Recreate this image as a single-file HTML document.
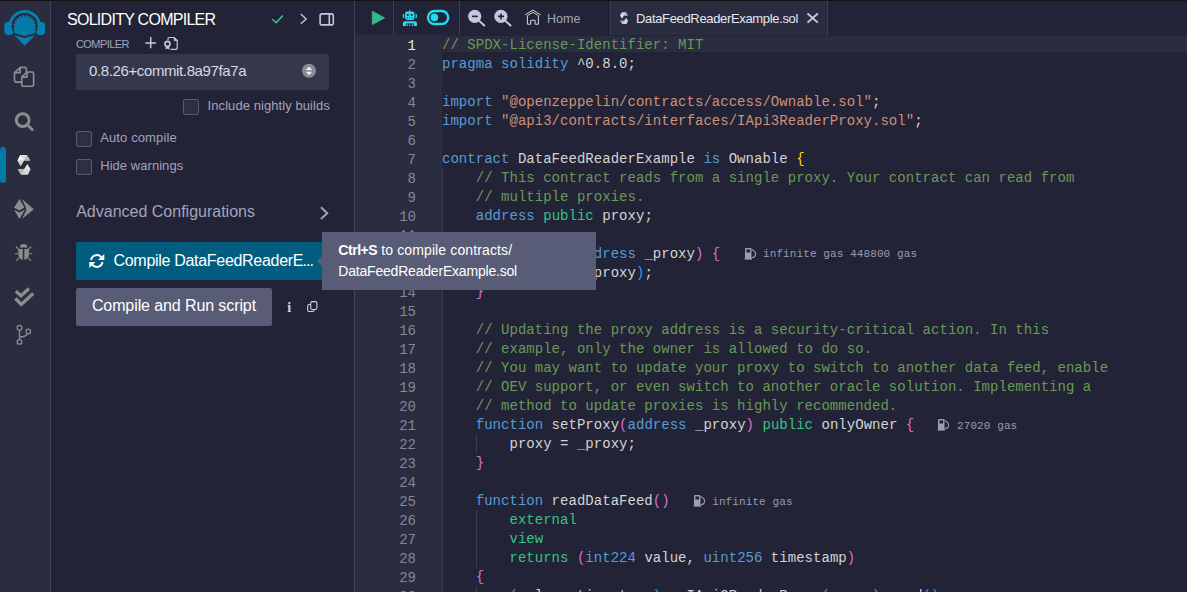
<!DOCTYPE html>
<html><head><meta charset="utf-8">
<style>
*{box-sizing:border-box;margin:0;padding:0}
html,body{width:1187px;height:592px;overflow:hidden;background:#222336;font-family:"Liberation Sans",sans-serif;color:#babbcc}
.abs{position:absolute}
.t{position:absolute;line-height:1;white-space:pre}
svg{position:absolute;overflow:visible}
#topline{left:0;top:0;width:1187px;height:1px;background:#141414}
#iconpanel{left:0;top:1px;width:50px;height:591px;background:#2a2c3f}
#iconborder{left:50px;top:1px;width:1px;height:591px;background:#404257}
#sideborder{left:354px;top:1px;width:1px;height:591px;background:#404257}
#gutter{left:355px;top:35px;width:87px;height:557px;background:#2a2c3f}
#curline{left:443px;top:36px;width:744px;height:16px;background:#2a2c3f}
.code{position:absolute;left:442px;top:36px;letter-spacing:0.03px;font-family:"Liberation Mono",monospace;font-size:14px;line-height:19px;white-space:pre;color:#d4d4d4}
.lnums{position:absolute;left:355px;top:37px;width:61px;text-align:right;font-family:"Liberation Mono",monospace;font-size:14px;line-height:19px;color:#858797;white-space:pre}
.c{color:#6a9955}.k{color:#569cd6}.m{color:#33c486}.s{color:#ce9178}.y{color:#ffd700}.p{color:#da70d6}.b{color:#179fff}
.gas{position:absolute;font-family:"Liberation Mono",monospace;font-size:11px;line-height:1;color:#9a9bae;white-space:pre;letter-spacing:0.1px}
.guide{position:absolute;width:1px;background:#3a3c50}
.cb{position:absolute;width:16px;height:16px;border:1px solid #585a74;border-radius:2px;background:#2d2f43}
</style></head><body>
<div class="abs" id="topline"></div>
<div class="abs" id="iconpanel"></div>
<div class="abs" id="iconborder"></div>
<div class="abs" id="sideborder"></div>
<div class="abs" id="gutter"></div>
<div class="abs" id="curline"></div>

<!-- ICON PANEL -->
<svg style="left:0;top:0" width="50" height="50" viewBox="0 0 50 50">
  <g fill="#0681b1">
    <path d="M8.4 26.3 A16.3 16.3 0 0 1 41 26.3 L38 26.3 A13.3 13.3 0 0 0 11.4 26.3 Z"/>
    <rect x="4.4" y="22" width="9" height="12.9" rx="3.6"/>
    <rect x="36" y="22" width="9.1" height="12.9" rx="3.6"/>
  </g>
  <circle cx="24.7" cy="26.3" r="13.0" fill="#2a2c3f"/>
  <path d="M14.08 30.16 A11.3 11.3 0 1 1 35.32 30.16 L35.3 33 L24.7 35.9 L14.1 33 Z" fill="#037ca9"/>
  <path fill="#2a2c3f" d="M36.52 27.65 L34.10 26.30 L36.52 24.95 Z M36.36 23.93 L33.64 23.40 L35.53 21.37 Z M35.06 20.44 L32.30 20.77 L33.47 18.26 Z M32.74 17.53 L30.23 18.70 L30.56 15.94 Z M29.63 15.47 L27.60 17.36 L27.07 14.64 Z M26.05 14.48 L24.70 16.90 L23.35 14.48 Z M22.33 14.64 L21.80 17.36 L19.77 15.47 Z M18.84 15.94 L19.17 18.70 L16.66 17.53 Z M15.93 18.26 L17.10 20.77 L14.34 20.44 Z M13.87 21.37 L15.76 23.40 L13.04 23.93 Z M12.88 24.95 L15.30 26.30 L12.88 27.65 Z"/>
  <path d="M14.4 35.2 L24.7 38 L35 35.2 L24.7 45.7 Z" fill="#0681b1"/>
</svg>
<!-- files -->
<svg style="left:0;top:55px" width="50" height="40" viewBox="0 55 50 40" fill="none" stroke="#8e8e8e" stroke-width="1.6" stroke-linejoin="round">
  <path d="M20.2 67.4 L25 67.4 Q26.3 67.4 26.3 68.7 L26.3 72.3 M21.3 82.1 L15.8 82.1 Q14.5 82.1 14.5 80.8 L14.5 72.6 L20.2 67.4 L20.2 72.6 L14.5 72.6"/>
  <path d="M27 72 L32.3 72 Q33.6 72 33.6 73.3 L33.6 85 Q33.6 86.3 32.3 86.3 L23.1 86.3 Q21.8 86.3 21.8 85 L21.8 77.1 L27 72 L27 77.1 L21.8 77.1"/>
</svg>
<!-- search -->
<svg style="left:0;top:100px" width="50" height="40" viewBox="0 100 50 40" fill="none" stroke="#8c8c8c" stroke-width="3" stroke-linecap="round">
  <circle cx="22.7" cy="120.1" r="6.4"/>
  <path d="M27.5 125 L32.2 129.5"/>
</svg>
<!-- active bar -->
<div class="abs" style="left:0;top:147px;width:6px;height:36px;background:#007aa6;border-radius:2.5px 3px 3px 2.5px/3px 3px 3px 3px"></div>
<!-- solidity -->
<svg style="left:0;top:145px" width="50" height="40" viewBox="0 145 50 40">
  <path d="M20.3 155.1 L26.9 155.1 L30.2 160.4 L24 160.4 L20.6 166 L17.5 160.4 Z" fill="#dedede"/>
  <path d="M20.3 155.1 L24 160.4 L17.5 160.4 Z" fill="#f0f0f0"/>
  <path d="M26.9 155.1 L30.2 160.4 L24 160.4 Z" fill="#b4b4b4"/>
  <path d="M17.5 160.4 L24 160.4 L20.6 166 Z" fill="#d2d2d2"/>
  <path d="M27.4 164.2 L30.5 169.5 L27.9 174.8 L21.1 174.8 L17.8 169.2 L24.2 169.2 Z" fill="#d6d6d6"/>
  <path d="M27.4 164.2 L30.5 169.5 L24.2 169.2 Z" fill="#e6e6e6"/>
  <path d="M17.8 169.2 L24.2 169.2 L21.1 174.8 Z" fill="#b8b8b8"/>
</svg>
<!-- deploy -->
<svg style="left:0;top:195px" width="50" height="30" viewBox="0 195 50 30" fill="#8c8c8c">
  <path d="M19.5 199 L24.5 207.5 L19.5 210.6 L14 207.8 Z"/>
  <path d="M14 209.8 L19.5 212.6 L25 209.5 L19.5 218.9 Z"/>
  <path d="M22 199 L33.8 209.2 L22 219 L26 210.8 Q26.6 209.2 26 208 Z"/>
</svg>
<!-- bug -->
<svg style="left:0;top:240px" width="50" height="30" viewBox="0 240 50 30" fill="#8c8c8c">
  <path d="M19.8 247.5 A3.8 3.6 0 0 1 27.4 247.5 Z"/>
  <path d="M18.3 249 L22.8 249 L22.8 259.8 Q18.3 259 18.3 254 Z"/>
  <path d="M24.4 249 L28.9 249 L28.9 254 Q28.9 259 24.4 259.8 Z"/>
  <g stroke="#8c8c8c" stroke-width="1.1" fill="none">
    <path d="M16 246.5 L18.8 249.5 M31.2 246.5 L28.4 249.5 M15 253.8 L18.3 253.8 M32.2 253.8 L28.9 253.8 M16.3 260.8 L19 257.5 M30.9 260.8 L28.2 257.5"/>
  </g>
</svg>
<!-- double check -->
<svg style="left:0;top:283px" width="50" height="30" viewBox="0 283 50 30" fill="none" stroke="#8c8c8c" stroke-width="3.4" stroke-linejoin="miter">
  <path d="M15.8 291.3 L21 295.7 L29 288.4"/>
  <path d="M15.4 298.5 L21.3 304.5 L33.2 293.6"/>
</svg>
<!-- git -->
<svg style="left:0;top:320px" width="50" height="30" viewBox="0 320 50 30" fill="none" stroke="#8c8c8c" stroke-width="1.3">
  <circle cx="19.5" cy="327.8" r="2.4"/>
  <circle cx="28.3" cy="331.4" r="2.3"/>
  <circle cx="19.5" cy="341.9" r="2.3"/>
  <path d="M19.5 330.1 L19.5 339.6 M19.5 337 Q26.5 337 27.4 333.5"/>
</svg>

<!-- SIDE PANEL -->
<div class="t" style="left:67px;top:12.2px;font-size:16px;color:#ffffff;letter-spacing:-0.72px">SOLIDITY COMPILER</div>
<svg style="left:260px;top:5px" width="80" height="30" viewBox="260 5 80 30" fill="none">
  <path d="M272.3 19.2 L276.2 22.8 L282.9 15.4" stroke="#32d08e" stroke-width="1.5"/>
  <path d="M300.8 14.1 L306.2 18.9 L300.8 23.8" stroke="#c6c7de" stroke-width="1.3"/>
  <rect x="320.1" y="13.9" width="13.2" height="11" rx="2" stroke="#c6c7de" stroke-width="1.6"/>
  <path d="M329.3 14 L329.3 24.8" stroke="#c6c7de" stroke-width="1.6"/>
</svg>
<div class="t" style="left:76px;top:38.8px;font-size:11px;color:#a2a3bd;letter-spacing:-0.58px">COMPILER</div>
<svg style="left:140px;top:32px" width="45" height="22" viewBox="140 32 45 22" fill="none" stroke="#c6c7de" stroke-width="1.5">
  <path d="M145.3 43 L156.1 43 M150.7 37 L150.7 48.2"/>
  <path d="M168 40.3 L168 38.8 Q168 37.5 169.3 37.5 L174.2 37.5 L177.2 40.5 L177.2 48 Q177.2 49.3 175.9 49.3 L170.6 49.3" stroke-width="1.2"/>
  <path d="M174.2 37.5 L174.2 40.5 L177.2 40.5 Z" fill="#c6c7de" stroke-width="0.8"/>
  <circle cx="167.5" cy="43.9" r="2.5" stroke-width="1.6"/>
  <path d="M165.7 46.2 L165.7 49.8 L167.5 48.6 L169.3 49.8 L169.3 46.2 Z" fill="#c6c7de" stroke="none"/>
</svg>

<div class="abs" style="left:76px;top:54px;width:253px;height:36px;background:#35384c;border-radius:2px"></div>
<div class="t" style="left:89px;top:62.8px;font-size:15px;color:#d8d9e6;letter-spacing:-0.38px">0.8.26+commit.8a97fa7a</div>
<svg style="left:300px;top:62px" width="20" height="20" viewBox="300 62 20 20">
  <circle cx="309" cy="70.8" r="7" fill="#8b8b99"/>
  <path d="M305.9 70 L309 66.4 L312.1 70 Z M305.9 71.7 L309 75.2 L312.1 71.7 Z" fill="#f4f4f8"/>
</svg>

<div class="cb" style="left:183px;top:99px"></div>
<div class="t" style="left:207.6px;top:99.3px;font-size:13px;color:#a2a3bd;letter-spacing:0.07px">Include nightly builds</div>
<div class="cb" style="left:76px;top:131px"></div>
<div class="t" style="left:100.2px;top:130.8px;font-size:13px;color:#a2a3bd;letter-spacing:0.12px">Auto compile</div>
<div class="cb" style="left:76px;top:159px"></div>
<div class="t" style="left:100.2px;top:158.8px;font-size:13px;color:#a2a3bd;letter-spacing:0.05px">Hide warnings</div>

<div class="t" style="left:76.2px;top:203.5px;font-size:16px;color:#a2a3bd">Advanced Configurations</div>
<svg style="left:315px;top:200px" width="20" height="25" viewBox="315 200 20 25" fill="none">
  <path d="M320.9 207.3 L327.3 213.2 L320.9 219" stroke="#a2a3bd" stroke-width="1.9"/>
</svg>

<div class="abs" style="left:76px;top:242px;width:250px;height:38px;background:#005d7f;border-radius:2px"></div>
<svg style="left:85px;top:250px" width="25" height="22" viewBox="85 250 25 22" fill="none" stroke="#ffffff" stroke-width="1.9">
  <path d="M91.09 260 A5.8 5.8 0 0 1 101.6 257.6"/>
  <path d="M102.51 262 A5.8 5.8 0 0 1 92 264.4"/>
  <path d="M104.3 253.9 L104.3 260.1 L98.1 260.1 Z" fill="#fff" stroke="none"/>
  <path d="M89.3 268 L89.3 261.9 L95.5 261.9 Z" fill="#fff" stroke="none"/>
</svg>
<div class="t" style="left:113.5px;top:252.5px;font-size:16px;color:#ffffff;letter-spacing:-0.3px">Compile DataFeedReaderE</div>
<div class="t" style="left:302.4px;top:252.5px;font-size:16px;color:#ffffff;letter-spacing:-0.9px">...</div>

<div class="abs" style="left:76px;top:288px;width:196px;height:38px;background:#595c76;border-radius:2px"></div>
<div class="t" style="left:91.9px;top:298.4px;font-size:16px;color:#ffffff;letter-spacing:-0.1px">Compile and Run script</div>
<div class="t" style="left:287.2px;top:301px;font-size:14px;font-weight:bold;color:#d0d1e2;font-family:'Liberation Serif',serif">i</div>
<svg style="left:300px;top:295px" width="25" height="22" viewBox="300 295 25 22" fill="none" stroke="#d0d1e2" stroke-width="1.1">
  <rect x="310.7" y="301.6" width="6.2" height="7.9" rx="1.6"/>
  <path d="M310.7 304.5 L308.9 304.5 Q307.7 304.5 307.7 305.7 L307.7 310.3 Q307.7 311.5 308.9 311.5 L312.8 311.5 Q314 311.5 314 310.3 L314 309.5"/>
</svg>

<!-- EDITOR TOOLBAR -->
<div class="abs" style="left:393px;top:1px;width:1px;height:34px;background:#3c3e54"></div>
<div class="abs" style="left:459px;top:1px;width:1px;height:34px;background:#3c3e54"></div>
<svg style="left:360px;top:5px" width="100" height="25" viewBox="360 5 100 25">
  <path d="M372.3 11.2 L384.6 17.9 L372.3 24.6 Z" fill="#32ba89" stroke="#32ba89" stroke-width="0.9" stroke-linejoin="round"/>
  <g fill="#22dcef">
    <rect x="409.2" y="9.8" width="1" height="2.2"/>
    <rect x="405.1" y="11.6" width="9.4" height="8.3" rx="1.8"/>
    <rect x="402.8" y="14.1" width="1.4" height="3.8"/>
    <rect x="415.5" y="14.1" width="1.4" height="3.8"/>
    <path d="M402.8 26 L402.8 23.5 Q402.8 21.2 405.2 21.2 L414.6 21.2 Q417 21.2 417 23.5 L417 26 L413.8 26 L413.8 23.6 L406 23.6 L406 26 Z"/>
    <rect x="406.8" y="24.3" width="1.1" height="1.7"/>
    <rect x="409.3" y="24.3" width="1.1" height="1.7"/>
    <rect x="411.8" y="24.3" width="1.1" height="1.7"/>
  </g>
  <g fill="#222336">
    <rect x="406.9" y="14" width="1.8" height="1.8"/>
    <rect x="410.8" y="14" width="1.8" height="1.8"/>
    <rect x="406.9" y="17.4" width="1" height="1"/>
    <rect x="409.3" y="17.4" width="1" height="1"/>
    <rect x="411.7" y="17.4" width="1" height="1"/>
  </g>
  <rect x="428" y="11" width="20.2" height="13" rx="6.5" fill="none" stroke="#22dcef" stroke-width="2.4"/>
  <circle cx="434.4" cy="17.4" r="3.8" fill="#22dcef"/>
</svg>
<svg style="left:462px;top:5px" width="60" height="25" viewBox="462 5 60 25">
  <circle cx="474.7" cy="16.35" r="6.6" fill="#c6c7de"/>
  <path d="M479.3 21 L484.3 25.6" stroke="#c6c7de" stroke-width="2" stroke-linecap="round"/>
  <path d="M472 16.4 L477.8 16.4" stroke="#222336" stroke-width="1.6"/>
  <circle cx="500.9" cy="16.35" r="6.6" fill="#c6c7de"/>
  <path d="M505.5 21 L510.5 25.6" stroke="#c6c7de" stroke-width="2" stroke-linecap="round"/>
  <path d="M498 16.4 L504 16.4 M501 13.4 L501 19.4" stroke="#222336" stroke-width="1.6"/>
</svg>
<svg style="left:520px;top:5px" width="25" height="25" viewBox="520 5 25 25" fill="none" stroke="#d6d6e0" stroke-width="1">
  <path d="M525.2 14.9 L532.9 10 L540.6 14.9"/>
  <path d="M527.4 15.6 L532.9 12.3 L538.4 15.6 L538.4 24.2 L535.1 24.2 L535.1 20.3 L530.7 20.3 L530.7 24.2 L527.4 24.2 Z"/>
</svg>
<div class="t" style="left:547px;top:13.2px;font-size:12.5px;color:#a2a3bd">Home</div>

<!-- tab -->
<div class="abs" style="left:610px;top:1px;width:218px;height:34px;background:#2a2c3f;border-left:1px solid #3c3e54;border-right:1px solid #3c3e54"></div>
<svg style="left:615px;top:8px" width="20" height="20" viewBox="615 8 20 20">
  <g transform="translate(620,12.2) scale(0.623,0.6) translate(-17.5,-155.1)">
  <path d="M20.3 155.1 L26.9 155.1 L30.2 160.4 L24 160.4 L20.6 166 L17.5 160.4 Z" fill="#d4d5e4"/>
  <path d="M26.9 155.1 L30.2 160.4 L24 160.4 Z" fill="#a8a9bd"/>
  <path d="M27.4 164.2 L30.5 169.5 L27.9 174.8 L21.1 174.8 L17.8 169.2 L24.2 169.2 Z" fill="#cfd0e0"/>
  <path d="M17.8 169.2 L24.2 169.2 L21.1 174.8 Z" fill="#a8a9bd"/>
  </g>
</svg>
<div class="t" style="left:636px;top:11.6px;font-size:13px;color:#e6e7f0;letter-spacing:-0.34px">DataFeedReaderExample.sol</div>
<svg style="left:800px;top:8px" width="25" height="20" viewBox="800 8 25 20">
  <path d="M807.5 13.5 L817.8 22.6 M817.8 13.5 L807.5 22.6" stroke="#c6c7de" stroke-width="1.9"/>
</svg>

<!-- CODE -->
<div class="lnums"><span style="color:#e6e7f0">1</span>
2
3
4
5
6
7
8
9
10
11
12
13
14
15
16
17
18
19
20
21
22
23
24
25
26
27
28
29
30</div>
<div class="guide" style="left:442px;top:168px;height:424px"></div>
<div class="guide" style="left:476px;top:263px;height:19px"></div>
<div class="guide" style="left:476px;top:434px;height:19px"></div>
<div class="guide" style="left:476px;top:510px;height:57px"></div>
<div class="guide" style="left:476px;top:586px;height:6px"></div>
<div class="code"><span class="c">// SPDX-License-Identifier: MIT</span>
<span class="k">pragma</span> <span class="k">solidity</span> ^0.8.0;

<span class="k">import</span> <span class="s">"@openzeppelin/contracts/access/Ownable.sol"</span>;
<span class="k">import</span> <span class="s">"@api3/contracts/interfaces/IApi3ReaderProxy.sol"</span>;

<span class="k">contract</span> DataFeedReaderExample <span class="k">is</span> Ownable <span class="y">{</span>
    <span class="c">// This contract reads from a single proxy. Your contract can read from</span>
    <span class="c">// multiple proxies.</span>
    <span class="k">address</span> <span class="m">public</span> proxy;

    <span class="k">constructor</span><span class="p">(</span><span class="k">address</span> _proxy<span class="p">)</span> <span class="p">{</span>
        setProxy<span class="b">(</span>_proxy<span class="b">)</span>;
    <span class="p">}</span>

    <span class="c">// Updating the proxy address is a security-critical action. In this</span>
    <span class="c">// example, only the owner is allowed to do so.</span>
    <span class="c">// You may want to update your proxy to switch to another data feed, enable</span>
    <span class="c">// OEV support, or even switch to another oracle solution. Implementing a</span>
    <span class="c">// method to update proxies is highly recommended.</span>
    <span class="k">function</span> setProxy<span class="p">(</span><span class="k">address</span> _proxy<span class="p">)</span> <span class="m">public</span> onlyOwner <span class="p">{</span>
        proxy = _proxy;
    <span class="p">}</span>

    <span class="k">function</span> readDataFeed<span class="p">()</span>
        <span class="m">external</span>
        <span class="m">view</span>
        <span class="m">returns</span> <span class="p">(</span><span class="k">int224</span> value, <span class="k">uint256</span> timestamp<span class="p">)</span>
    <span class="p">{</span>
        <span class="b">(</span>value, timestamp<span class="b">)</span> = IApi3ReaderProxy<span class="b">(</span>proxy<span class="b">)</span>.read<span class="b">()</span>;</div>

<!-- gas -->
<svg style="left:744.6px;top:247.8px" width="13" height="13" viewBox="0 0 13 13"><rect x="0" y="0" width="6.5" height="11" rx="1" fill="#9d9eb0"/><rect x="-0.4" y="10.3" width="7.4" height="1.3" fill="#9d9eb0"/><rect x="1.4" y="1.4" width="3.7" height="3.1" fill="#222336"/><path d="M6.5 1.6 Q10.8 3.2 10.5 6.4 Q10.3 9.6 6.8 9.6" fill="none" stroke="#9d9eb0" stroke-width="1.1"/></svg>
<svg style="left:938.4px;top:419.3px" width="13" height="13" viewBox="0 0 13 13"><rect x="0" y="0" width="6.5" height="11" rx="1" fill="#9d9eb0"/><rect x="-0.4" y="10.3" width="7.4" height="1.3" fill="#9d9eb0"/><rect x="1.4" y="1.4" width="3.7" height="3.1" fill="#222336"/><path d="M6.5 1.6 Q10.8 3.2 10.5 6.4 Q10.3 9.6 6.8 9.6" fill="none" stroke="#9d9eb0" stroke-width="1.1"/></svg>
<svg style="left:693.7px;top:495.3px" width="13" height="13" viewBox="0 0 13 13"><rect x="0" y="0" width="6.5" height="11" rx="1" fill="#9d9eb0"/><rect x="-0.4" y="10.3" width="7.4" height="1.3" fill="#9d9eb0"/><rect x="1.4" y="1.4" width="3.7" height="3.1" fill="#222336"/><path d="M6.5 1.6 Q10.8 3.2 10.5 6.4 Q10.3 9.6 6.8 9.6" fill="none" stroke="#9d9eb0" stroke-width="1.1"/></svg>
<div class="gas" style="left:763px;top:249.3px">infinite gas 448800 gas</div>
<div class="gas" style="left:957px;top:420.6px">27020 gas</div>
<div class="gas" style="left:712.2px;top:496.6px">infinite gas</div>

<!-- TOOLTIP -->
<div class="abs" style="left:322px;top:232px;width:274px;height:58px;background:#595c76"></div>
<svg style="left:310px;top:250px" width="15" height="22" viewBox="310 250 15 22"><path d="M322.5 255.5 L316.7 261 L322.5 266.5 Z" fill="#595c76"/></svg>
<div class="t" style="left:338.3px;top:243.2px;font-size:14px;color:#ffffff;letter-spacing:0.12px"><b style="letter-spacing:-0.45px">Ctrl+S</b> to compile contracts/</div>
<div class="t" style="left:338.3px;top:264.2px;font-size:14px;color:#ffffff;letter-spacing:-0.2px">DataFeedReaderExample.sol</div>

</body></html>
